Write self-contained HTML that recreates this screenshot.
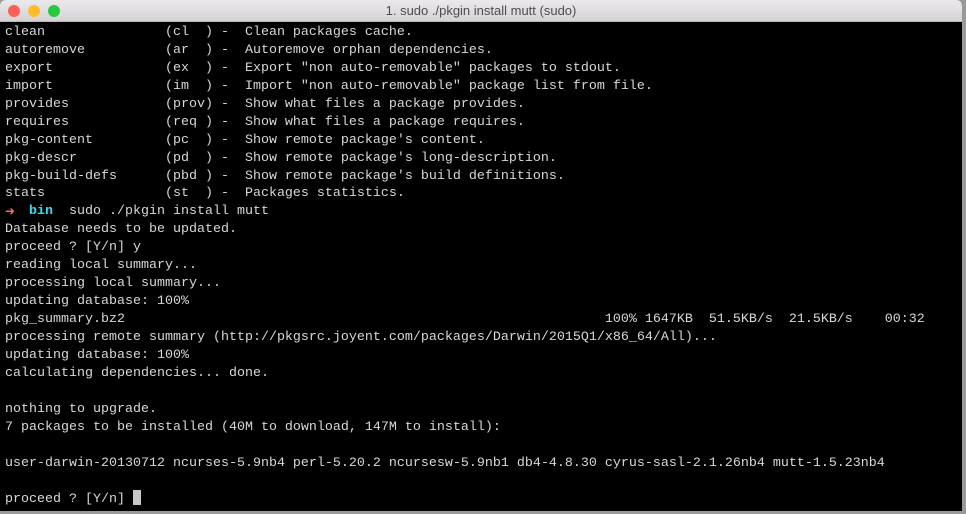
<!DOCTYPE html>
<html><head><meta charset="utf-8"><style>
html,body{margin:0;padding:0;width:966px;height:514px;overflow:hidden;background:#9a9a9a;}
.win{position:absolute;left:0;top:0;width:962px;height:511px;background:#000;border-radius:5px 5px 0 0;overflow:hidden;}
.tb{height:22px;background:linear-gradient(#ebe9eb,#d4d2d4);border-bottom:1px solid #b8b6b8;box-sizing:border-box;position:relative;font:13px "Liberation Sans",sans-serif;color:#4d4d4d;text-align:center;line-height:22px;}
.d{position:absolute;top:5px;width:12px;height:12px;border-radius:50%;}
pre{margin:0;position:absolute;left:5px;top:24px;font:13.33px/17.93px "Liberation Mono",monospace;color:#d8d8d8;}
.r{color:#ff6a5a;font-weight:bold;font-family:"DejaVu Sans",sans-serif;font-size:12px;display:inline-block;width:8px;height:17.93px;line-height:17.93px;vertical-align:top;overflow:visible}.c{color:#3ad8e8;font-weight:bold}
.cur{display:inline-block;width:8px;height:15px;background:#c8c8c8;vertical-align:-3px}
</style></head><body>
<div class="win">
<div class="tb"><span class="d" style="left:8px;background:#fc5f57"></span><span class="d" style="left:28px;background:#fdbc2e"></span><span class="d" style="left:48px;background:#28c840"></span>1. sudo ./pkgin install mutt (sudo)</div>
<pre>clean               (cl  ) -  Clean packages cache.
autoremove          (ar  ) -  Autoremove orphan dependencies.
export              (ex  ) -  Export "non auto-removable" packages to stdout.
import              (im  ) -  Import "non auto-removable" package list from file.
provides            (prov) -  Show what files a package provides.
requires            (req ) -  Show what files a package requires.
pkg-content         (pc  ) -  Show remote package's content.
pkg-descr           (pd  ) -  Show remote package's long-description.
pkg-build-defs      (pbd ) -  Show remote package's build definitions.
stats               (st  ) -  Packages statistics.
<span class="r">➜</span>  <span class="c">bin</span>  sudo ./pkgin install mutt
Database needs to be updated.
proceed ? [Y/n] y
reading local summary...
processing local summary...
updating database: 100%
pkg_summary.bz2                                                            100% 1647KB  51.5KB/s  21.5KB/s    00:32
processing remote summary (http://pkgsrc.joyent.com/packages/Darwin/2015Q1/x86_64/All)...
updating database: 100%
calculating dependencies... done.

nothing to upgrade.
7 packages to be installed (40M to download, 147M to install):

user-darwin-20130712 ncurses-5.9nb4 perl-5.20.2 ncursesw-5.9nb1 db4-4.8.30 cyrus-sasl-2.1.26nb4 mutt-1.5.23nb4

proceed ? [Y/n] <span class="cur"></span></pre>
</div>
</body></html>
